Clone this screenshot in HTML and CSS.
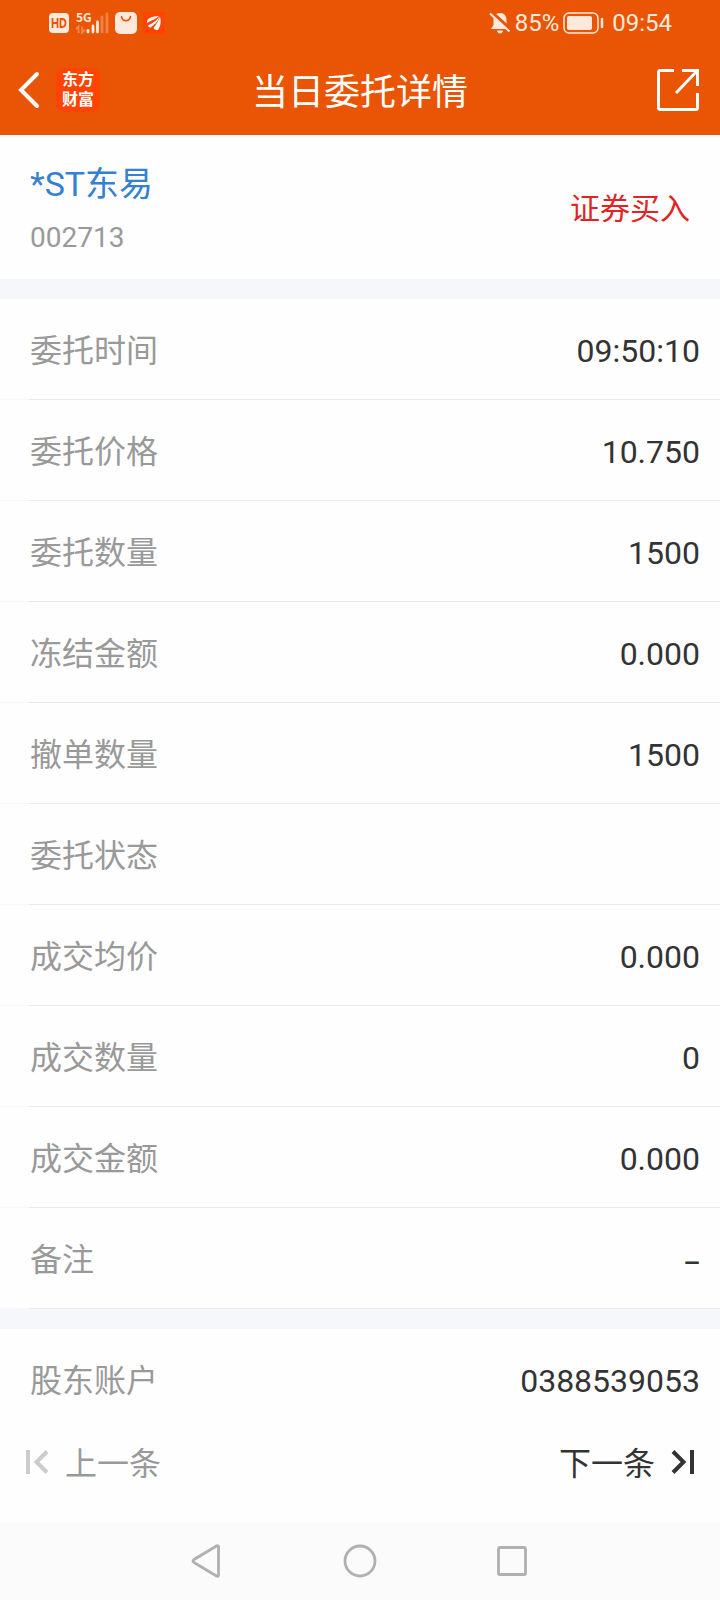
FILE: index.html
```html
<!DOCTYPE html>
<html lang="zh-CN">
<head>
<meta charset="utf-8">
<meta name="viewport" content="width=device-width, initial-scale=1">
<title>当日委托详情</title>
<link rel="stylesheet" href="styles.css">
</head>
<body>
<div class="screen">
  <header class="header">
    <div class="status">
      <div class="status-group status-left">
        <svg width="20" height="20" viewBox="0 0 20 20" role="img" aria-label="HD"><rect width="20" height="20" rx="4" fill="#ffe9dc"/><path d="M3.500 5v10M8.500 5v10M3.500 10h5M11.500 6v8h1.500q3.500 0 3.500-4t-3.500-4z" fill="none" stroke="#e95504" stroke-width="1.800"/></svg>
        <div class="network">
          <span class="network-type">5G</span>
          <svg width="34" height="22" viewBox="0 0 34 22" aria-hidden="true"><g stroke="#ffe9dc" stroke-width="2.800" stroke-linecap="round"><path d="M13 20v-1.500M18 20v-6M22.500 20v-10"/><path d="M27 20V5M32 20V2" opacity=".3"/></g><path d="M1 17l2.500-2.500v6.500M7 14.500v6.500l3-3.500" fill="none" stroke="#ffe9dc" stroke-width="1.800" opacity=".35"/></svg>
        </div>
        <svg width="22" height="22" viewBox="0 0 22 22" aria-hidden="true"><rect width="22" height="22" rx="5" fill="#ffe9dc"/><path d="M6.500 4.500c1 5.500 8 5.500 9 0" fill="none" stroke="#e95504" stroke-width="1.500" stroke-linecap="round"/></svg>
        <svg width="22" height="22" viewBox="0 0 22 22" aria-hidden="true"><rect width="22" height="22" fill="#ff4402"/><path d="M4 10C4 6 9 4.500 16 4C13 7 9 8 4 11zM5 13.500C10 11 13 9 16.500 4.500C15 10 11 13 7.500 15.500Q5 15.500 5 13.500zM10.500 16C13.500 12 15.500 9 17 5C18.500 10 17.500 14 15 18Q11.500 18.500 10.500 16z" fill="#fff"/></svg>
      </div>
      <div class="status-group status-right">
        <svg width="22" height="22" viewBox="0 0 22 22" aria-hidden="true"><path d="M11 1c4.500 0 6.500 3 6.500 7v5l2.500 4H2l2.500-4V8c0-4 2-7 6.500-7zM8 18.500h6q-.5 3-3 3t-3-3z" fill="#ffe9dc"/><path d="M2 0l20 18" stroke="#e95504" stroke-width="4"/><path d="M1 1.500l19.500 18" stroke="#ffe9dc" stroke-width="2"/></svg>
        <span>85%</span>
        <svg width="41" height="22" viewBox="0 0 41 22" aria-hidden="true"><rect x="1" y="1" width="34" height="20" rx="5" fill="none" stroke="#ffe9dc" stroke-width="1.500"/><rect x="4" y="4" width="25" height="14" rx="2" fill="#ffe9dc"/><path d="M39 7v8" stroke="#ffe9dc" stroke-width="2.500" stroke-linecap="round"/></svg>
        <time class="clock">09:54</time>
      </div>
    </div>
    <div class="titlebar">
      <div class="title-side">
        <button class="icon-button" type="button" aria-label="返回"><svg width="22" height="38" viewBox="0 0 22 38"><path d="M19 3L3 19l16 16" fill="none" stroke="#fff" stroke-width="4" stroke-linecap="round"/></svg></button>
        <div class="brand"><span>东方</span><span>财富</span></div>
      </div>
      <h1 class="title">当日委托详情</h1>
      <div class="title-side title-end">
        <button class="icon-button" type="button" aria-label="分享"><svg width="46" height="44" viewBox="0 0 46 44"><path d="M18 2.500H4.500q-2 0-2 2v35q0 2 2 2h35q2 0 2-2V25M26 2.500h15.500V18M40.500 3.500L20 25" fill="none" stroke="#fff" stroke-width="3"/></svg></button>
      </div>
    </div>
  </header>

  <main class="content">
    <section class="stock">
      <div>
        <h2 class="stock-name">*ST东易</h2>
        <p class="stock-code">002713</p>
      </div>
      <p class="side">证券买入</p>
    </section>
    <dl class="details">
      <div class="row"><dt>委托时间</dt><dd>09:50:10</dd></div>
      <div class="row"><dt>委托价格</dt><dd>10.750</dd></div>
      <div class="row"><dt>委托数量</dt><dd>1500</dd></div>
      <div class="row"><dt>冻结金额</dt><dd>0.000</dd></div>
      <div class="row"><dt>撤单数量</dt><dd>1500</dd></div>
      <div class="row"><dt>委托状态</dt><dd></dd></div>
      <div class="row"><dt>成交均价</dt><dd>0.000</dd></div>
      <div class="row"><dt>成交数量</dt><dd>0</dd></div>
      <div class="row"><dt>成交金额</dt><dd>0.000</dd></div>
      <div class="row"><dt>备注</dt><dd class="empty">–</dd></div>
    </dl>
    <dl class="details account">
      <div class="row"><dt>股东账户</dt><dd>0388539053</dd></div>
    </dl>
  </main>

  <nav class="pager">
    <button class="pager-button previous" type="button" disabled><svg width="24" height="24" viewBox="0 0 24 24" aria-hidden="true"><path d="M3 0v24" stroke="currentColor" stroke-width="4"/><path d="M22 1.500L11.500 12L22 22.500" fill="none" stroke="currentColor" stroke-width="4"/></svg><span>上一条</span></button>
    <button class="pager-button" type="button"><span>下一条</span><svg width="24" height="24" viewBox="0 0 24 24" aria-hidden="true"><path d="M21 0v24" stroke="currentColor" stroke-width="4"/><path d="M2 1.500L12.500 12L2 22.500" fill="none" stroke="currentColor" stroke-width="4"/></svg></button>
  </nav>

  <footer class="system-nav">
    <button class="icon-button" type="button" aria-label="系统返回"><svg width="34" height="34" viewBox="0 0 34 34"><path d="M25.500 2L3 15.500q-2 1.500 0 3L25.500 32q2 1 2-1V3q0-2-2-1z" fill="none" stroke="#b0b0b0" stroke-width="2.800"/></svg></button>
    <button class="icon-button" type="button" aria-label="主页"><svg width="34" height="34" viewBox="0 0 34 34"><circle cx="17" cy="17" r="15" fill="none" stroke="#b0b0b0" stroke-width="2.800"/></svg></button>
    <button class="icon-button" type="button" aria-label="最近任务"><svg width="34" height="34" viewBox="0 0 34 34"><rect x="3.500" y="3.500" width="27" height="27" rx="1.500" fill="none" stroke="#b0b0b0" stroke-width="2.800"/></svg></button>
  </footer>
</div>
</body>
</html>
```

FILE: styles.css
```css
* {
  box-sizing: border-box;
}

body,
h1,
h2,
p,
dl,
dd {
  margin: 0;
}

body {
  background: #fefefe;
  color: #333;
  font-family: Roboto, "Noto Sans CJK SC", sans-serif;
}

svg {
  display: block;
  flex: none;
}

button {
  padding: 0;
  border: 0;
  background: none;
  font: inherit;
  color: inherit;
}

.screen {
  display: flex;
  flex-direction: column;
  min-height: 100vh;
}

.header {
  background: #e95504;
  color: #fff;
}

.status {
  display: flex;
  justify-content: space-between;
  height: 46px;
  padding: 0 48px 0 49px;
  color: #ffe9dc;
}

.status-group {
  display: flex;
  align-items: center;
}

.status-left {
  gap: 6px;
}

.status-right {
  gap: 4px;
  font-size: 24px;
}

.network {
  position: relative;
}

.network-type {
  position: absolute;
  top: -1px;
  left: 1px;
  font-family: "Noto Sans CJK SC", sans-serif;
  font-size: 12px;
  font-weight: 700;
  line-height: 12px;
}

.clock {
  margin-left: 4px;
}

.titlebar {
  display: flex;
  align-items: center;
  height: 89px;
  padding: 0 18px 2px;
}

.title-side {
  display: flex;
  flex: 1;
  align-items: center;
  gap: 16px;
}

.title-end {
  justify-content: flex-end;
}

.brand {
  display: flex;
  flex-direction: column;
  padding: 2px 6px;
  border-radius: 8px;
  background: #ff4402;
  font-size: 16px;
  font-weight: 700;
  line-height: 20px;
}

.title {
  padding-bottom: 2px;
  font-size: 36px;
  font-weight: 400;
}

.stock {
  display: flex;
  align-items: center;
  justify-content: space-between;
  padding: 26px 30px 22px;
}

.stock-name {
  color: #3480d3;
  font-size: 34px;
  font-weight: 400;
  line-height: 46px;
}

.stock-code {
  margin-top: 12px;
  color: #999;
  font-size: 28px;
  line-height: 38px;
}

.side {
  color: #e02323;
  font-size: 30px;
  line-height: 42px;
}

.details {
  border-top: 20px solid #f5f7fa;
}

.row {
  display: flex;
  justify-content: space-between;
  padding: 31px 20px 27px 30px;
  border-bottom: 1px solid;
  border-image: linear-gradient(to right, #f8f8f8 30px, #ebebeb 30px) 1;
  font-size: 32px;
  line-height: 42px;
}

.row dt {
  color: #999;
}

.empty {
  font-family: "Noto Sans", sans-serif;
}

.account .row {
  padding-bottom: 0;
  border-bottom: 0;
}

.pager {
  display: flex;
  flex: 1;
  align-items: center;
  justify-content: space-between;
  min-height: 120px;
  padding: 0 25px;
}

.pager-button {
  display: flex;
  align-items: center;
  gap: 16px;
  font-size: 32px;
  line-height: 42px;
}

.pager-button span {
  padding-top: 4px;
}

.previous {
  color: #999;
}

.previous svg {
  color: #ccc;
}

.system-nav {
  display: flex;
  align-items: center;
  justify-content: center;
  gap: 118px;
  height: 78px;
  background: #fbfbfb;
}
```
